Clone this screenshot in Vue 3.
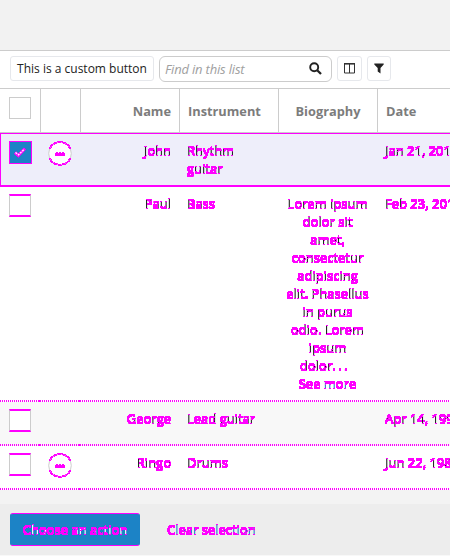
<script setup>
const rows = [
  { cls: 'selected', checked: true, more: true, name: 'John', inst: ['Rhythm', 'guitar'], bio: [], date: 'Jan 21, 2015' },
  { cls: 'tall', name: 'Paul', inst: ['Bass'], bio: ['Lorem ipsum', 'dolor sit', 'amet,', 'consectetur', 'adipiscing', 'elit. Phasellus', 'in purus', 'odio. Lorem', 'ipsum'], last: 'dolor', link: 'See more', date: 'Feb 23, 2015' },
  { cls: 'short alt', name: 'George', inst: ['Lead guitar'], bio: [], date: 'Apr 14, 1995' },
  { cls: 'short', more: true, name: 'Ringo', inst: ['Drums'], bio: [], date: 'Jun 22, 1985' },
]
</script>

<template>
  <div class="page">
    <svg class="defs" width="0" height="0">
      <!-- Marks glyph pixels that differ from the same glyphs one pixel higher -->
      <filter id="diff" x="-5%" y="-20%" width="110%" height="140%" color-interpolation-filters="sRGB">
        <feOffset in="SourceAlpha" dy="-1" result="up" />
        <feComposite in="SourceAlpha" in2="up" operator="arithmetic" k2="1" k3="-1" result="a" />
        <feComposite in="up" in2="SourceAlpha" operator="arithmetic" k2="1" k3="-1" result="b" />
        <feMerge result="m"><feMergeNode in="a" /><feMergeNode in="b" /></feMerge>
        <feComponentTransfer in="m" result="t"><feFuncA type="linear" slope="60" intercept="-1" /></feComponentTransfer>
        <feFlood flood-color="#f0f" />
        <feComposite in2="t" operator="in" result="c" />
        <feMerge><feMergeNode in="SourceGraphic" /><feMergeNode in="c" /></feMerge>
      </filter>
    </svg>
    <div class="top"></div>
    <div class="toolbar">
      <button class="btn custom"><span>This is a custom button</span></button>
      <div class="search">
        <span>Find in this list</span>
        <svg width="13" height="13" viewBox="0 0 13 13"><circle cx="5.2" cy="5.2" r="4" fill="none" stroke="#222" stroke-width="1.9" /><path d="M8.2 8.2L12 12" stroke="#222" stroke-width="2.3" /></svg>
      </div>
      <button class="btn columns"><svg width="11" height="11" viewBox="0 0 11 11"><path d="M.5 .5h10v9.500H.5zM5.500 1v9" fill="none" stroke="#333" /><path d="M0 .8h11" stroke="#333" stroke-width="1.600" /></svg></button>
      <button class="btn filter"><svg width="10" height="11" viewBox="0 0 10 11"><path d="M.3 .5h9.400v1L6.500 5v5.500L3.700 8.500V5L.3 1.500z" fill="#222" /></svg></button>
    </div>
    <div class="grid head">
      <div class="check-cell"><i class="box"></i></div>
      <div></div>
      <div class="right">Name</div>
      <div>Instrument</div>
      <div class="center">Biography</div>
      <div>Date</div>
    </div>
    <div v-for="r in rows" :key="r.name" class="grid row" :class="r.cls">
      <div class="check-cell">
        <i class="box" :class="{ checked: r.checked }">
          <svg v-if="r.checked" width="22" height="22" viewBox="0 0 22 22"><path d="M6 11.500l3.300 3L16 7.500" fill="none" stroke="#f0f" stroke-width="3.200" /><path d="M6.500 11.500l3 2.300L15.500 8" fill="none" stroke="#fff" stroke-width="1.300" stroke-dasharray="2 1" /></svg>
        </i>
      </div>
      <div class="more-cell">
        <svg v-if="r.more" width="24" height="26" viewBox="0 0 24 26">
          <circle cx="12" cy="12.500" r="11.300" fill="#fff" stroke="#ccc" />
          <path d="M1.500 8A11.500 11.500 0 0 1 22.500 8M1.500 17A11.500 11.500 0 0 0 22.500 17" fill="none" stroke="#f0f" stroke-width="2" shape-rendering="crispEdges" />
          <path d="M2.500 6.500A11.500 11.500 0 0 1 21.500 6.500M2.500 18.500A11.500 11.500 0 0 0 21.500 18.500" fill="none" stroke="#fff" stroke-width="0.800" stroke-dasharray="1 3" />
          <path d="M7 12h1v-1h2v1h1v-1h2v1h1v-1h2v1h1v3H7z" fill="#f0f" shape-rendering="crispEdges" />
        </svg>
      </div>
      <div class="right mark">{{ r.name }}</div>
      <div class="mark"><p v-for="t in r.inst" :key="t">{{ t }}</p></div>
      <div class="center mark bio">
        <p v-for="t in r.bio" :key="t">{{ t }}</p>
        <p v-if="r.last" class="last">{{ r.last }}<span class="dots">...</span></p>
        <p v-if="r.link" class="link">{{ r.link }}</p>
      </div>
      <div class="mark date">{{ r.date }}</div>
    </div>
    <div class="gap"></div>
    <div class="footer">
      <button class="action"><span class="mark">Choose an action</span></button>
      <span class="mark clear">Clear selection</span>
    </div>
  </div>
</template>

<style>
body { background: #fff; overflow: hidden; }
</style>
<style scoped>
* { box-sizing: border-box; }
.page { width: 450px; height: 556px; overflow: hidden; font: 13px/18px "Open Sans", sans-serif; color: #222; background: #f8f8f8; }
.defs { display: block; }
.top { height: 51px; background: #f2f2f2; border-bottom: 1px solid #ccc; }
.toolbar { height: 38px; padding: 5px 10px 0; display: flex; background: #fff; border-bottom: 1px solid #ccc; }
button { font: inherit; color: inherit; padding: 0; }
.btn { height: 25px; background: #fff; border: 1px solid #e6e8ec; border-radius: 3px; display: flex; align-items: center; justify-content: center; }
.custom { width: 144px; font-size: 12px; white-space: nowrap; }
.search { width: 173px; height: 26px; margin-left: 5px; padding: 0 9px 0 5px; border: 1px solid #ccc; border-radius: 6px; display: flex; align-items: center; justify-content: space-between; font-size: 12.5px; letter-spacing: -0.18px; font-style: italic; color: #a0a0a0; }
.search { font-size: 13px; }
.search svg { margin-bottom: 2px; }
.columns { width: 25px; margin-left: 5px; }
.filter { width: 24px; margin-left: 5px; }
.grid { display: grid; grid-template-columns: 41px 40px 99px 99px 99px 120px; }
.head { height: 44px; border-bottom: 1px solid #ccc; background: #fff; font-weight: 700; font-size: 12.800px; color: #7c7c7c; }
.head > div { border-right: 1px solid #ccc; padding: 13px 8px 0; }
.head > .check-cell { padding: 8px 0 0 9px; }
.box { display: block; width: 22px; height: 22px; border: 1px solid #ccc; background: #fff; }
.row { background: #fff; }
.row > div { padding: 8px 9px 0 7px; }
.row > .check-cell { padding: 7px 0 0 9px; }
.row .box { height: 23px; border-top: 2px solid #f0f; border-bottom: 2px solid #f0f; }
.row .box.checked { width: 23px; border: 1px solid #f0f; background: #1c83c6; }
.box svg { display: block; margin: -1px; }
.row > .more-cell { padding: 7px 0 0 7px; }
.more-cell svg { display: block; }
.row.selected { height: 54px; background: #eeeefa; border-top: 1px solid #f0f; border-bottom: 2px solid #f0f; box-shadow: inset 1px 0 #f0f; }
.row.tall { height: 215px; }
.row.short { height: 44px; }
.row.alt { background-color: #f8f8f8; }
.row.tall, .row.short { background-image: linear-gradient(#f0f, #f0f), linear-gradient(#f0f, #f0f), repeating-linear-gradient(90deg, #f0f 0 1px, transparent 1px 2px); background-size: 3px 2px, 3px 2px, 100% 2px; background-position: 38px 100%, 78px 100%, 0 100%; background-repeat: no-repeat; }
.right { text-align: right; }
.center { text-align: center; }
.mark { filter: url(#diff); white-space: nowrap; }
.row > .bio { padding: 8px 2px 0 0; }
p { margin: 0; }
.last { padding-right: 5px; }
.dots { letter-spacing: 2.500px; }
.link, .clear { color: #1c83c6; }
.gap { height: 14px; background: #f3f3f3; }
.footer { height: 51px; background: #ededed; padding: 9px 10px 0; display: flex; }
.action { width: 130px; height: 33px; border: 1px solid #f0f; border-left-color: #1c83c6; border-right-color: #1c83c6; border-radius: 3px; background: #1c83c6; color: #fff; }
.action .mark { display: inline-block; }
.clear { height: 20px; margin: 8px 0 0 27px; }
</style>
